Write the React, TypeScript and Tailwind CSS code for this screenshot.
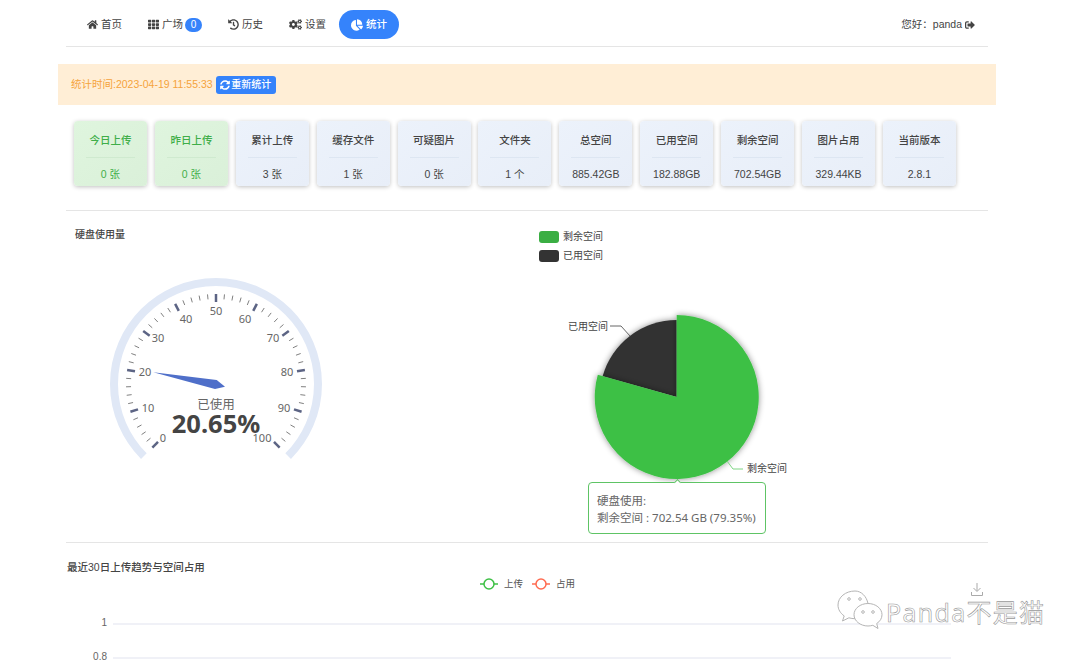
import { FaChartPie, FaCogs, FaHistory, FaHome, FaSignOutAlt, FaSyncAlt, FaTh } from "react-icons/fa";
import type { ReactNode } from "react";

const FONT = "font-['Liberation_Sans','Noto_Sans_CJK_SC',sans-serif]";

const stats = [
  { title: "今日上传", value: "0 张", green: true },
  { title: "昨日上传", value: "0 张", green: true },
  { title: "累计上传", value: "3 张" },
  { title: "缓存文件", value: "1 张" },
  { title: "可疑图片", value: "0 张" },
  { title: "文件夹", value: "1 个" },
  { title: "总空间", value: "885.42GB" },
  { title: "已用空间", value: "182.88GB" },
  { title: "剩余空间", value: "702.54GB" },
  { title: "图片占用", value: "329.44KB" },
  { title: "当前版本", value: "2.8.1" },
];

// echarts nudges the gauge labels, so these are read off the picture
const gaugeLabels = [
  { v: 0, x: 67, y: 168 },
  { v: 10, x: 52, y: 138 },
  { v: 20, x: 49, y: 102 },
  { v: 30, x: 62, y: 68 },
  { v: 40, x: 90, y: 49 },
  { v: 50, x: 120, y: 41 },
  { v: 60, x: 149, y: 49 },
  { v: 70, x: 177, y: 68 },
  { v: 80, x: 191, y: 102 },
  { v: 90, x: 188, y: 138 },
  { v: 100, x: 166, y: 168 },
];

function NavItem({ icon, label, badge, active }: { icon: ReactNode; label: string; badge?: string; active?: boolean }) {
  return (
    <a
      className={
        active
          ? "flex h-[29px] items-center gap-[3px] rounded-full bg-[#3583fb] px-[12px] font-medium text-white"
          : "flex h-[29px] items-center gap-[3px] px-[13px] text-[#444]"
      }
    >
      {icon}
      <span>{label}</span>
      {badge && (
        <span className="-ml-[1px] flex h-[14px] w-[17px] items-center justify-center rounded-full bg-[#3583fb] text-[10px] text-white">
          {badge}
        </span>
      )}
    </a>
  );
}

function StatCard({ title, value, green }: { title: string; value: string; green?: boolean }) {
  return (
    <div
      className={
        green
          ? "flex h-[65px] w-[73px] flex-col items-center rounded-[4px] bg-gradient-to-br from-[#dff5de] to-[#daf0d9] px-[12px] text-[#3fae49] shadow-[0_1px_4px_rgba(0,0,0,0.25)]"
          : "flex h-[65px] w-[73px] flex-col items-center rounded-[4px] bg-gradient-to-br from-[#ecf2fb] to-[#e8eef8] px-[12px] text-[#444] shadow-[0_1px_4px_rgba(0,0,0,0.25)]"
      }
    >
      <div className={`flex h-[37px] w-full items-end justify-center border-b pb-[10px] text-[10.5px] leading-[14px] font-medium ${green ? "border-[#cfeacf]" : "border-[#dde6f2]"}`}>
        {title}
      </div>
      <div className="pt-[9px] text-[10.5px] leading-[14px] whitespace-nowrap">{value}</div>
    </div>
  );
}

function polar(r: number, v: number) {
  const a = ((225 - 2.7 * v) * Math.PI) / 180;
  return { x: 120 + r * Math.cos(a), y: 114 - r * Math.sin(a) };
}

function Gauge() {
  const ticks = Array.from({ length: 51 }, (_, i) => i * 2);
  const arcStart = polar(102, 0);
  const arcEnd = polar(102, 100);
  return (
    <svg width="240" height="200" viewBox="0 0 240 200" className="font-['Noto_Sans','Noto_Sans_CJK_SC',sans-serif]">
      <path
        d={`M${arcStart.x} ${arcStart.y}A102 102 0 1 1 ${arcEnd.x} ${arcEnd.y}`}
        fill="none"
        stroke="#e0e8f6"
        strokeWidth="8"
      />
      {ticks.map((v) => {
        const major = v % 10 === 0;
        const a = polar(90, v);
        const b = polar(major ? 82 : 85, v);
        return (
          <line
            key={v}
            x1={a.x}
            y1={a.y}
            x2={b.x}
            y2={b.y}
            stroke={major ? "#5c6484" : "#808080"}
            strokeWidth={major ? 2.5 : 1}
          />
        );
      })}
      {gaugeLabels.map((l) => (
        <text key={l.v} x={l.x} y={l.y + 4} textAnchor="middle" fontSize="11" fill="#666">
          {l.v}
        </text>
      ))}
      <polygon points="57.3,102.3 120.7,110 129,116.7 119,119" fill="#4f6fc9" />
      <text x="120" y="139" textAnchor="middle" fontSize="12.5" fill="#666">
        已使用
      </text>
      <text x="120" y="163" textAnchor="middle" fontSize="25.5" fontWeight="700" fill="#444">
        20.65%
      </text>
    </svg>
  );
}

function PieChart() {
  return (
    <svg width="270" height="220" viewBox="0 0 270 220" className="mt-[4px] overflow-visible">
      <defs>
        <filter id="pieShadow" x="-20%" y="-20%" width="140%" height="140%">
          <feDropShadow dx="0" dy="0" stdDeviation="3" floodColor="#000" floodOpacity="0.45" />
        </filter>
      </defs>
      <path d="M146.7 131L146.7 54A77 77 0 0 0 72.6 110.2Z" fill="#333" filter="url(#pieShadow)" />
      <path d="M146.7 131L146.7 49A82 82 0 1 1 67.8 108.8Z" fill="#3dc045" filter="url(#pieShadow)" />
      <path d="M80 60H91L100 70" fill="none" stroke="#666" strokeWidth="1" />
      <path d="M197 195L203 203H213" fill="none" stroke="#7ed584" strokeWidth="1" />
      <text x="38" y="64" fontSize="10" fill="#444">
        已用空间
      </text>
      <text x="217" y="206" fontSize="10" fill="#444">
        剩余空间
      </text>
    </svg>
  );
}

function WeChatMark() {
  return (
    <svg width="46" height="40" viewBox="0 0 46 40" fill="#fff" stroke="#b5b5b5" strokeWidth="1">
      <path d="M18 1C8.6 1 1 7.2 1 15c0 4.4 2.4 8.3 6.2 10.9L5.5 31l6.4-3.2c2 .6 4 .9 6.1.9 1 0 2-.1 3-.3" />
      <path d="M31 13.5c-7.7 0-14 5-14 11.2S23.300 36 31 36c1.700 0 3.300-.3 4.800-.7L41 38.500l-1.300-5c3.300-2 5.300-5.200 5.300-8.800 0-6.200-6.300-11.200-14-11.200z" />
      <path d="M31 13.500C29.500 6.500 24.500 1 18 1" />
      <circle cx="12" cy="9" r="1.300" fill="none" />
      <circle cx="23" cy="9" r="1.300" fill="none" />
      <circle cx="26" cy="22" r="1.300" fill="none" />
      <circle cx="36" cy="22" r="1.300" fill="none" />
    </svg>
  );
}

function LegendLine({ color, label }: { color: string; label: string }) {
  return (
    <div className="flex items-center gap-[6px]">
      <svg width="18" height="14" viewBox="0 0 18 14">
        <line x1="0" y1="7" x2="18" y2="7" stroke={color} strokeWidth="1.500" />
        <circle cx="9" cy="7" r="5" fill="#fff" stroke={color} strokeWidth="1.500" />
      </svg>
      <span>{label}</span>
    </div>
  );
}

export default function App() {
  return (
    <div className={`relative h-[660px] w-[1080px] overflow-hidden bg-white ${FONT}`}>
      <div className="ml-[66px] w-[922px]">
        {/* nav */}
        <div className="flex h-[47px] items-start justify-between border-b border-[#e5e5e5] pt-[10px] pr-[13px] text-[10.5px]">
          <nav className="flex pl-[8px]">
            <NavItem icon={<FaHome className="size-[11px]" />} label="首页" />
            <NavItem icon={<FaTh className="size-[11px]" />} label="广场" badge="0" />
            <NavItem icon={<FaHistory className="size-[11px]" />} label="历史" />
            <NavItem icon={<FaCogs className="size-[13px]" />} label="设置" />
            <NavItem icon={<FaChartPie className="size-[12px]" />} label="统计" active />
          </nav>
          <div className="flex h-[29px] items-center gap-[3px] text-[#444]">
            <span>您好：panda</span>
            <FaSignOutAlt className="size-[10px]" />
          </div>
        </div>

        {/* alert */}
        <div className="-mx-[8px] mt-[17px] flex h-[41px] items-center gap-[3px] bg-[#ffeed6] pl-[13px] text-[10.5px] text-[#f5a33c]">
          <span>统计时间:2023-04-19 11:55:33</span>
          <button className="flex h-[18px] w-[60px] items-center justify-center gap-[1px] rounded-[3px] bg-[#3583fb] text-[10px] font-medium text-white">
            <FaSyncAlt className="size-[10px]" />
            重新统计
          </button>
        </div>

        {/* stat cards */}
        <div className="mt-[16px] ml-[8px] flex gap-[7.9px]">
          {stats.map((s) => (
            <StatCard key={s.title} title={s.title} value={s.value} green={s.green} />
          ))}
        </div>

        {/* charts */}
        <div className="mt-[24px] flex h-[333px] border-y border-[#e5e5e5]">
          <div className="w-[464px] pt-[18px] pl-[9px]">
            <div className="text-[10px] leading-[12px] font-medium text-[#444]">硬盘使用量</div>
            <div className="mt-[29px] ml-[21px]">
              <Gauge />
            </div>
          </div>
          <div className="relative flex-1">
            <div className="flex flex-col gap-[7px] pt-[20px] pl-[9px] text-[10px] leading-[12px] text-[#444]">
              <div className="flex items-center gap-[4px]">
                <span className="h-[12px] w-[20px] rounded-[3px] bg-[#3aae43]" />
                剩余空间
              </div>
              <div className="flex items-center gap-[4px]">
                <span className="h-[12px] w-[20px] rounded-[3px] bg-[#333]" />
                已用空间
              </div>
            </div>
            <PieChart />
            <div className="absolute top-[271px] left-[58px] h-[52px] w-[178px] rounded-[4px] border border-[#5ec465] bg-white px-[8px] pt-[9px] font-['Noto_Sans','Noto_Sans_CJK_SC',sans-serif] text-[11.5px] leading-[17px] text-[#666]">
              <span className="absolute -top-[3px] left-[86px] size-[5px] rotate-45 border-t border-l border-[#5ec465] bg-white" />
              <div>硬盘使用:</div>
              <div className="whitespace-nowrap">剩余空间 : 702.54 GB (79.35%)</div>
            </div>
          </div>
        </div>

        {/* trend */}
        <div className="relative pt-[18px]">
          <div className="pl-[1px] text-[10.5px] leading-[12px] font-medium text-[#444]">最近30日上传趋势与空间占用</div>
          <div className="mt-[4px] flex pl-[414px] text-[9.5px] leading-[14px] text-[#555]">
            <div className="flex gap-[9px]">
              <LegendLine color="#3dc045" label="上传" />
              <LegendLine color="#ff6b50" label="占用" />
            </div>
          </div>
          <div className="mt-[27px] flex items-center text-[10px] leading-[10px] text-[#666]">
            <span className="w-[41px] text-right">1</span>
            <span className="mt-[2px] ml-[6px] h-[2px] w-[838px] bg-[#f0f1f7]" />
          </div>
          <div className="mt-[26px] flex items-center text-[10px] leading-[6px] text-[#666]">
            <span className="w-[41px] text-right">0.8</span>
            <span className="mt-[2px] ml-[6px] h-[2px] w-[838px] bg-[#f0f1f7]" />
          </div>
        </div>
      </div>

      {/* watermark */}
      <div className="absolute top-[590px] left-[837px] flex items-end">
        <WeChatMark />
        <div className="relative mb-[2px] ml-[3px] font-['Noto_Sans','Noto_Sans_CJK_SC',sans-serif] text-[25px] leading-[32px] tracking-[1.3px] text-white [-webkit-text-stroke:0.6px_#999]">
          Panda不是猫
          <svg className="absolute -top-[14px] left-[84px]" width="14" height="15" viewBox="0 0 14 15" fill="none" stroke="#aaa" strokeWidth="1">
            <path d="M7 1V9M3.500 6L7 9.500L10.500 6M1.500 10V13.500H12.500V10" />
          </svg>
        </div>
      </div>
    </div>
  );
}
